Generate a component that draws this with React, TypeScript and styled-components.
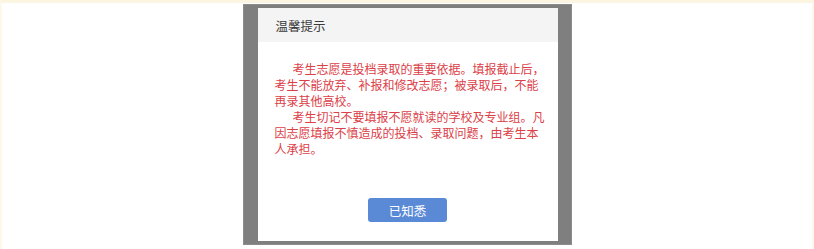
import React from 'react';
import styled, {createGlobalStyle} from 'styled-components';

const GlobalStyle = createGlobalStyle`
  html, body {
    margin: 0;
    padding: 0;
    background: #ffffff;
  }
  body {
    font-family: "Noto Sans CJK SC", "Noto Sans", sans-serif;
  }
`;

const NOTICE_PARAGRAPHS = [
  '考生志愿是投档录取的重要依据。填报截止后，考生不能放弃、补报和修改志愿；被录取后，不能再录其他高校。',
  '考生切记不要填报不愿就读的学校及专业组。凡因志愿填报不慎造成的投档、录取问题，由考生本人承担。',
];

const App: React.FC = () => (
  <>
    <GlobalStyle />
    <Page>
      <Overlay>
        <Dialog>
          <Header>温馨提示</Header>
          <Body>
            {NOTICE_PARAGRAPHS.map(text => (
              <Paragraph key={text}>{text}</Paragraph>
            ))}
          </Body>
          <Footer>
            <ConfirmButton type="button">已知悉</ConfirmButton>
          </Footer>
        </Dialog>
      </Overlay>
    </Page>
  </>
);

const Page = styled.div`
  box-sizing: border-box;
  width: 814px;
  height: 249px;
  display: flex;
  justify-content: center;
  align-items: flex-start;
  background: #ffffff;
  border-top: 3px solid #fcf5e1;
  border-left: 2px solid #fdf8ea;
  border-right: 2px solid #fdf8ea;
  overflow: hidden;
`;

const Overlay = styled.div`
  box-sizing: border-box;
  margin-top: 1px;
  width: 329px;
  height: 241px;
  padding: 4px 14px 4px 15px;
  background: #7f7f7f;
  box-shadow: inset 0 0 0 1px #8c8c8c;
`;

const Dialog = styled.div`
  width: 300px;
  height: 233px;
  display: flex;
  flex-direction: column;
  background: #ffffff;
`;

const Header = styled.div`
  height: 34px;
  display: flex;
  align-items: center;
  padding-left: 18px;
  background: #f4f4f4;
  color: #3a3a3a;
  font-size: 12.5px;
`;

const Body = styled.div`
  padding: 19px 13px 0 17px;
  flex: 1;
`;

const Paragraph = styled.p`
  margin: 0;
  color: #dc4047;
  font-size: 12px;
  line-height: 16px;
  text-indent: 18px;
`;

const Footer = styled.div`
  display: flex;
  justify-content: center;
  padding-bottom: 19px;
`;

const ConfirmButton = styled.button`
  width: 79px;
  height: 24px;
  border: none;
  border-radius: 3px;
  background: #5a8ad6;
  color: #ffffff;
  font-family: "Noto Sans CJK SC", "Noto Sans", sans-serif;
  font-size: 12.5px;
  padding: 0;
  cursor: pointer;
`;

export default App;
